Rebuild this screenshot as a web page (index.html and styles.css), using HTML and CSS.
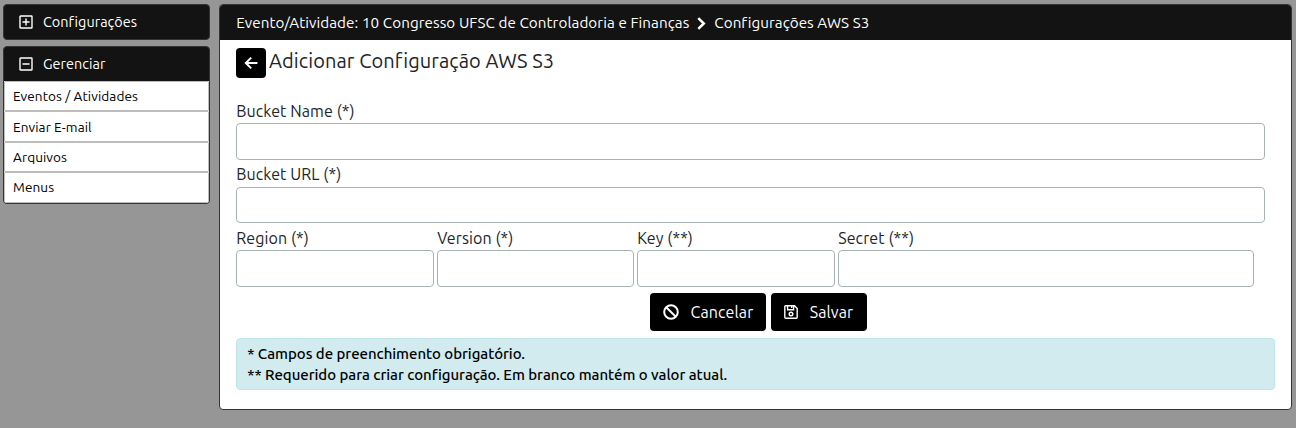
FILE: index.html
```html
<!DOCTYPE html>
<html lang="pt-BR">
<head>
<meta charset="utf-8">
<title>Configurações AWS S3</title>
<link rel="stylesheet" href="styles.css">
</head>
<body>
<nav class="sidebar">
  <section class="menu">
    <h2 class="menu-title"><svg class="toggle" viewBox="0 0 14 14"><rect x="1" y="1" width="12" height="12" rx=".6"/><path d="M7 3.5v7M3.5 7h7"/></svg><span>Configurações</span></h2>
  </section>
  <section class="menu">
    <h2 class="menu-title"><svg class="toggle" viewBox="0 0 14 14"><rect x="1" y="1" width="12" height="12" rx=".6"/><path d="M3.5 7h7"/></svg><span>Gerenciar</span></h2>
    <ul class="menu-list">
      <li>Eventos / Atividades</li>
      <li class="tall low">Enviar E-mail</li>
      <li>Arquivos</li>
      <li class="tall">Menus</li>
    </ul>
  </section>
</nav>
<main class="panel">
  <header class="crumbs"><span class="event">Evento/Atividade: 10 Congresso UFSC de Controladoria e Finanças</span><svg class="chevron" viewBox="0 0 9 13"><path d="M1.3 1.2 6.8 6.5 1.3 11.8"/></svg><span>Configurações AWS S3</span></header>
  <div class="content">
    <div class="heading">
      <button class="back" aria-label="Voltar"><svg viewBox="0 0 14 14"><path d="M7.2 1.6 1.8 7l5.4 5.4M1.8 7H13.4"/></svg></button>
      <h1>Adicionar Configuração AWS S3</h1>
    </div>
    <form class="form">
      <label class="field"><span>Bucket Name (*)</span><input type="text"></label>
      <label class="field second"><span>Bucket URL (*)</span><input type="text"></label>
      <div class="row">
        <label class="field"><span>Region (*)</span><input type="text"></label>
        <label class="field"><span>Version (*)</span><input type="text"></label>
        <label class="field"><span>Key (**)</span><input type="text"></label>
        <label class="field"><span>Secret (**)</span><input type="text"></label>
      </div>
    </form>
    <div class="actions">
      <button class="btn cancel"><svg class="ban" viewBox="0 0 16 16"><circle cx="8" cy="8" r="6.8"/><path d="M3.2 3.2l9.6 9.6"/></svg><span>Cancelar</span></button>
      <button class="btn save"><svg class="disk" viewBox="0 0 14 14"><path d="M1.7.8h8.8l2.7 2.7v8.8a.9.9 0 0 1-.9.9H1.7a.9.9 0 0 1-.9-.9V1.7a.9.9 0 0 1 .9-.9zM3.6 1v3.7h6V1M7.7 1v2"/><circle cx="7" cy="9" r="1.8"/></svg><span>Salvar</span></button>
    </div>
    <div class="notice">
      <p>* Campos de preenchimento obrigatório.</p>
      <p>** Requerido para criar configuração. Em branco mantém o valor atual.</p>
    </div>
  </div>
</main>
</body>
</html>
```
FILE: styles.css
```css
* { box-sizing: border-box; }
body {
  margin: 0;
  height: 428px;
  padding: 4px 4px 0 3px;
  display: flex;
  align-items: flex-start;
  gap: 9px;
  background: #969696;
  font-family: Ubuntu, "Noto Sans", sans-serif;
  color: #212529;
  overflow: hidden;
}
h1, h2, p, ul { margin: 0; padding: 0; font-weight: 400; }
span { white-space: nowrap; }
svg { fill: none; stroke: currentColor; flex: none; }
.sidebar { width: 207px; display: flex; flex-direction: column; gap: 6px; }
.menu { border: 1px solid #343434; border-radius: 4px; overflow: hidden; background: #131313; }
.menu-title { height: 34px; display: flex; align-items: center; padding-left: 15px; gap: 10px; font-size: 14.4px; letter-spacing: .03px; color: #fff; }
.toggle { width: 14px; height: 14px; stroke-width: 1.4; }
.menu-list { list-style: none; background: #fff; }
.menu-list li { height: 30px; border: 1px solid #bdbdbd; border-radius: 1px; padding-left: 8px; font-size: 13.6px; letter-spacing: .08px; line-height: 28px; color: #000; }
.menu-list .tall { height: 31px; }
.menu-list .low { line-height: 30px; }
.panel { width: 1073px; height: 406px; border: 1px solid #343434; border-radius: 4px; overflow: hidden; background: #fff; }
.crumbs { height: 35px; background: #131313; color: #fff; display: flex; align-items: center; padding: 0 0 0 16.3px; font-size: 15.2px; letter-spacing: .05px; }
.event { letter-spacing: .085px; }
.chevron { width: 9px; height: 13px; margin: 1px 8px 0 8px; stroke-width: 2.5; }
.content { padding: 8px 16px 0; }
.heading { display: flex; height: 30px; gap: 3px; }
.back { width: 30px; height: 30px; border: 0; border-radius: 4px; padding: 0; background: #000; color: #fff; display: flex; align-items: center; justify-content: center; }
.back svg { width: 14px; height: 14px; stroke-width: 2; }
h1 { font-size: 20px; line-height: 26px; letter-spacing: .09px; }
.form { padding-top: 21px; }
.field { display: flex; flex-direction: column; width: 1029px; font-size: 16px; line-height: 24px; letter-spacing: .1px; align-items: flex-start; }
.field span { padding-left: .2px; }
.field input { width: 100%; height: 37px; border: 1px solid #a8b2b5; border-radius: 4px; background: #fff; padding: 0 12px; }
.field.second { margin-top: 2px; }
.second input { height: 36px; margin-top: 1px; }
.row { display: grid; grid-template-columns: 198px 197px 198px 416px; gap: 3px; margin-top: 3px; }
.row .field { width: auto; }
.actions { display: flex; gap: 5px; padding: 6px 0 7px 414px; }
.btn { height: 38px; border: 0; border-radius: 4px; background: #000; color: #fff; display: flex; align-items: center; padding: 0 0 0 13px; font: 16px Ubuntu, "Noto Sans", sans-serif; letter-spacing: .12px; }
.cancel { width: 116px; gap: 11.5px; }
.save { width: 96px; gap: 11.7px; }
.ban { width: 16px; height: 16px; stroke-width: 2; }
.disk { width: 14px; height: 14px; stroke-width: 1.4; }
.notice { width: 1039px; height: 52px; border: 1px solid #bee5eb; border-radius: 4px; background: #d1ebef; color: #000; padding: 4px 0 0 10.2px; font-size: 15px; line-height: 21px; letter-spacing: -.04px; }
.notice p { font-weight: 500; }
```
